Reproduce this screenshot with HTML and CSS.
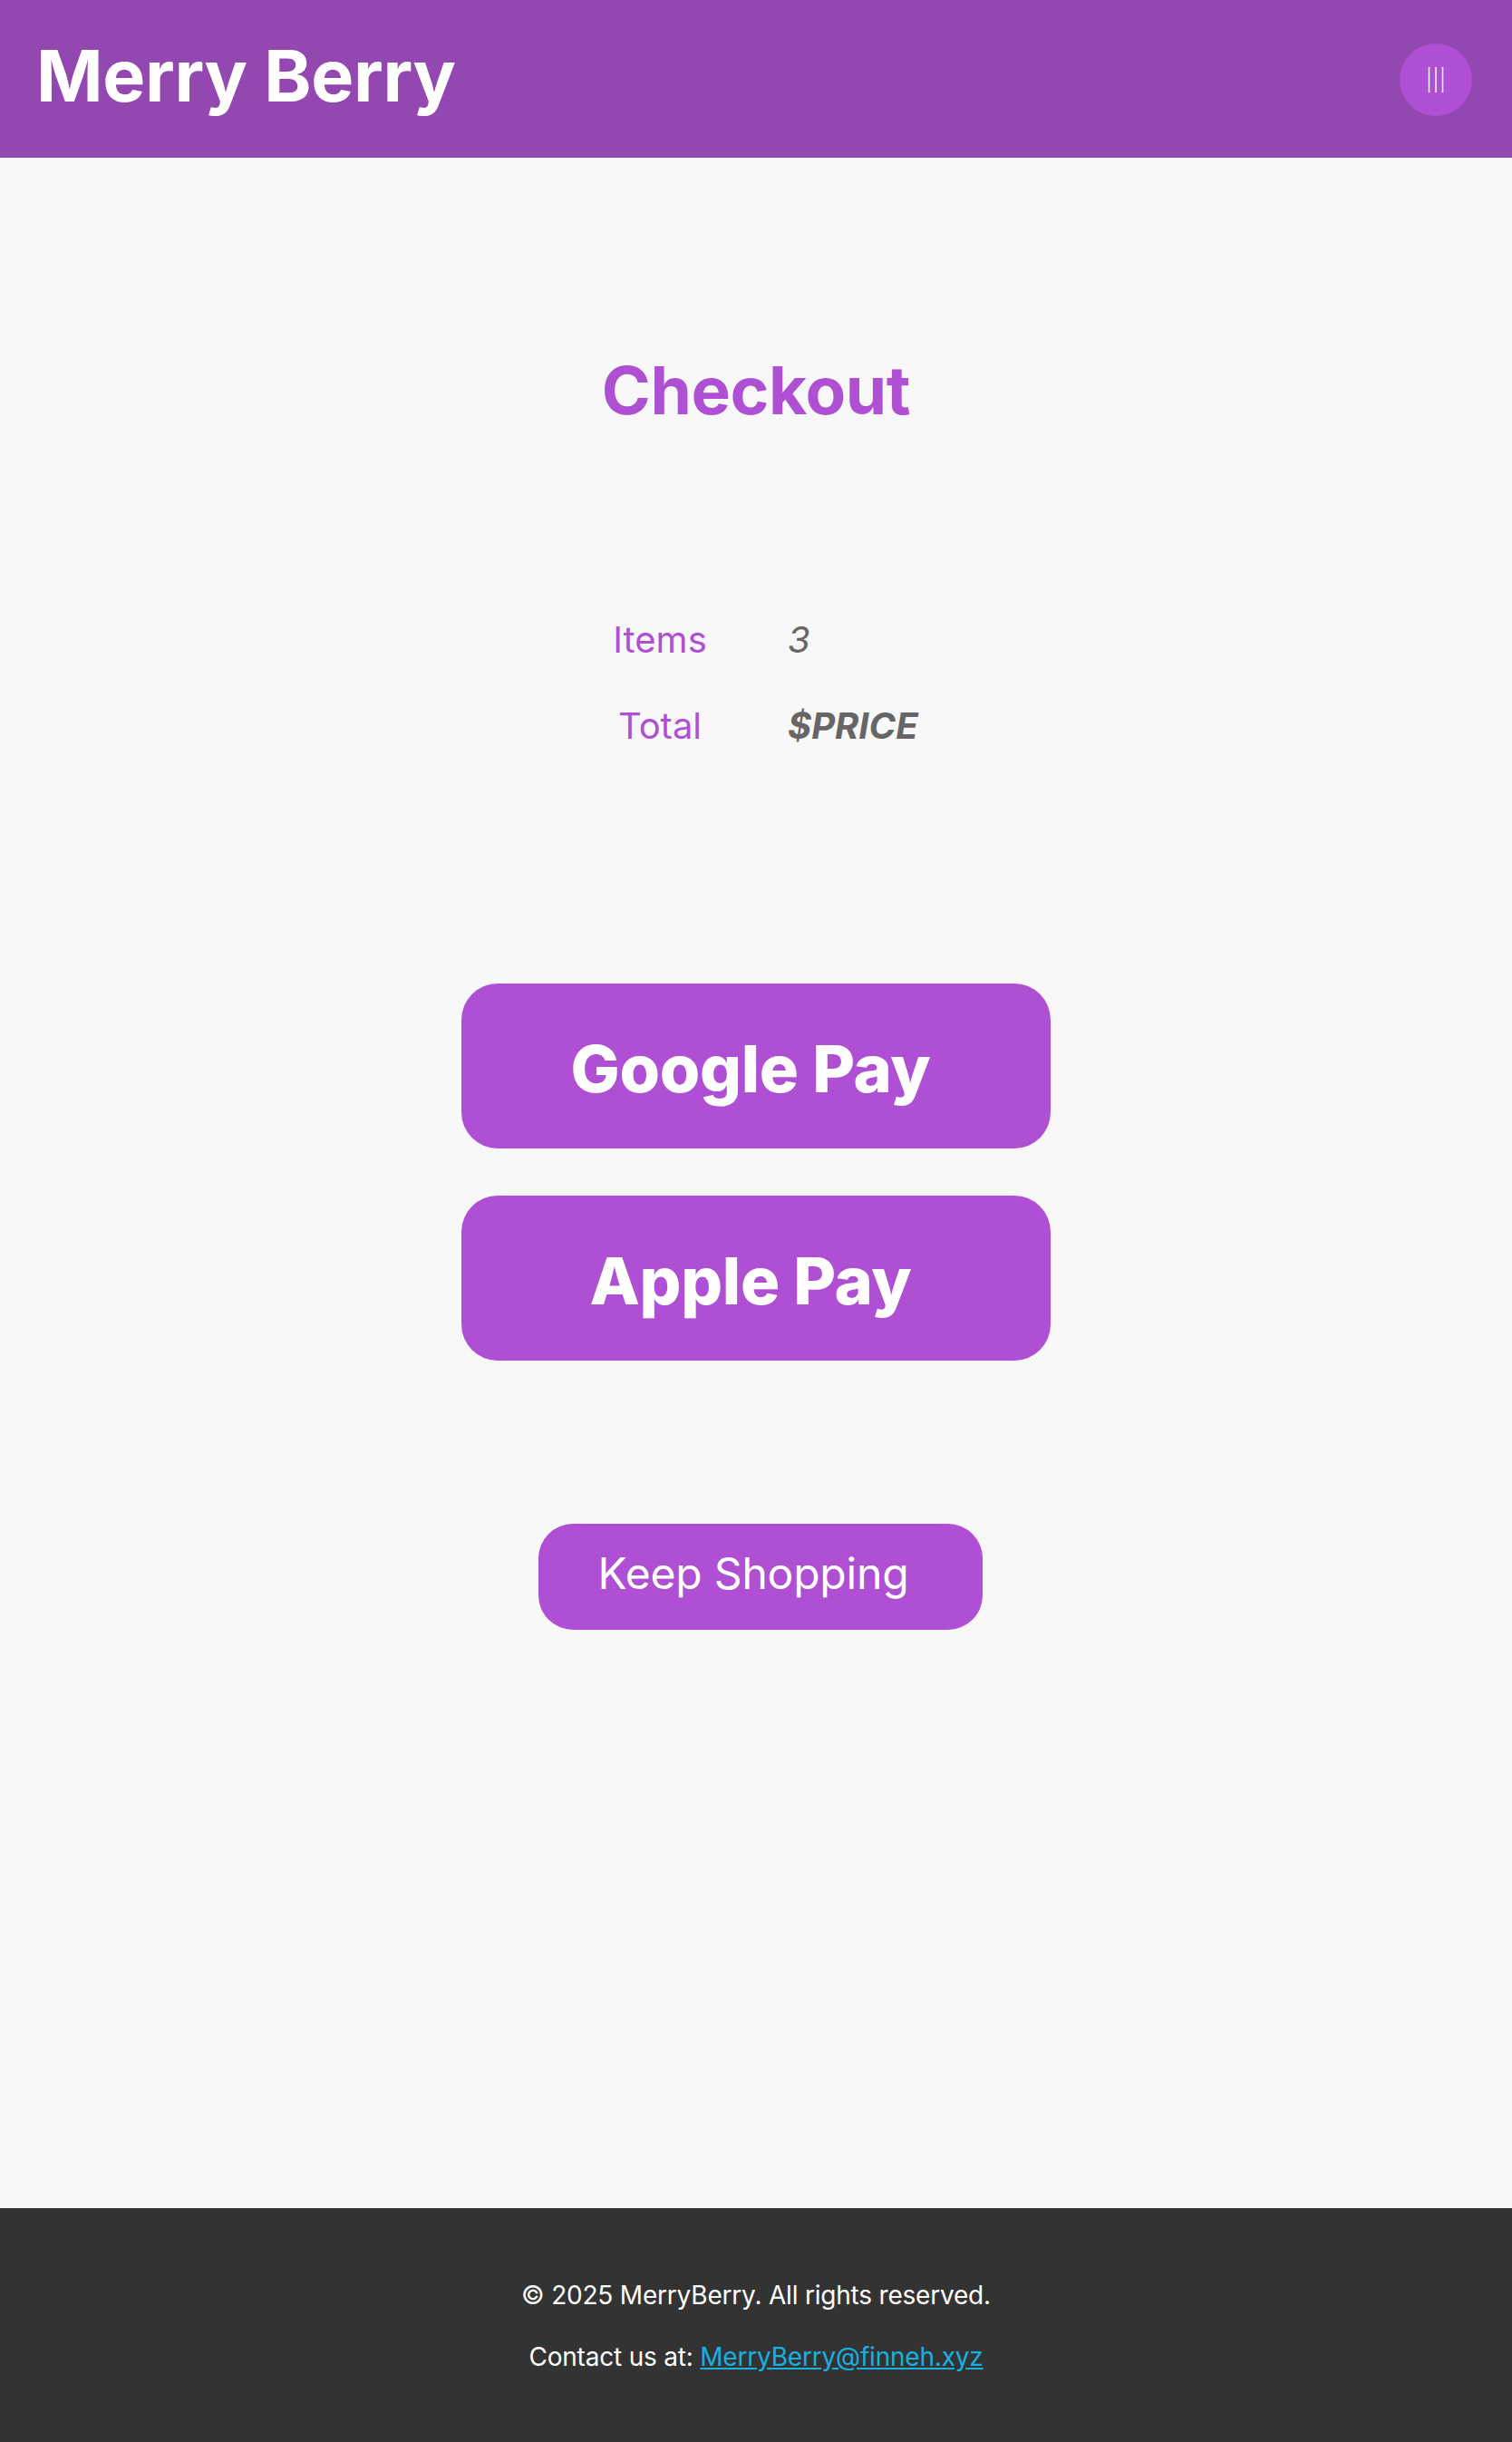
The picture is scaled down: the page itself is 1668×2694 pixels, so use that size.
FILE: index.html
```html
<!DOCTYPE html>
<html lang="en">
<head>
<meta charset="utf-8">
<title>Merry Berry - Checkout</title>
<link rel="stylesheet" href="styles.css">
</head>
<body>
<header class="site-header">
  <h1 class="brand">Merry Berry</h1>
  <button class="menu-btn" aria-label="Menu">
    <svg width="20" height="30" viewBox="0 0 20 30">
      <line x1="2.5" y1="1" x2="2.5" y2="29" stroke="#fff" stroke-width="1.5"/>
      <line x1="10" y1="1" x2="10" y2="29" stroke="#fff" stroke-width="1.5"/>
      <line x1="17.5" y1="1" x2="17.5" y2="29" stroke="#fff" stroke-width="1.5"/>
    </svg>
  </button>
</header>
<main class="checkout">
  <h2 class="title">Checkout</h2>
  <div class="summary">
    <div class="label">Items</div>
    <div class="value">3</div>
    <div class="label">Total</div>
    <div class="value price">$PRICE</div>
  </div>
  <div class="pay-list">
    <button class="pay-btn">Google Pay</button>
    <button class="pay-btn">Apple Pay</button>
  </div>
  <button class="keep-btn">Keep Shopping</button>
</main>
<footer class="site-footer">
  <p>© 2025 MerryBerry. All rights reserved.</p>
  <p>Contact us at: <a href="#">MerryBerry@finneh.xyz</a></p>
</footer>
</body>
</html>
```
FILE: styles.css
```css
* { box-sizing: border-box; }
html, body { margin: 0; padding: 0; }
body {
  font-family: Inter, "Noto Sans", "Liberation Sans", sans-serif;
  background: #f8f8f8;
  min-height: 100vh;
  display: flex;
  flex-direction: column;
}
.site-header {
  height: 174px;
  background: #9347b0;
  display: flex;
  align-items: center;
  justify-content: space-between;
  padding: 0 44px 0 40px;
}
.brand {
  margin: 0 0 8px 0;
  color: #fff;
  font-size: 79px;
  font-weight: 700;
  letter-spacing: -0.3px;
}
.menu-btn {
  width: 80px;
  height: 80px;
  border-radius: 50%;
  border: none;
  background: #af50d4;
  display: flex;
  align-items: center;
  justify-content: center;
  padding: 0;
  margin-top: 2px;
}
.menu-btn svg { display: block; }
.checkout {
  flex: 1;
  display: flex;
  flex-direction: column;
  align-items: center;
}
.title {
  margin: 212px 0 0 0;
  font-size: 73px;
  font-weight: 700;
  letter-spacing: -0.4px;
  color: #af50d4;
}
.summary {
  margin-top: 207px;
  display: grid;
  grid-template-columns: 200px 212px;
  row-gap: 47px;
  font-size: 40px;
  line-height: 48px;
}
.label {
  color: #af50d4;
  text-align: center;
}
.value {
  color: #666;
  font-style: italic;
  padding-left: 41px;
}
.price { font-weight: 700; }
.pay-list {
  margin-top: 260px;
  display: flex;
  flex-direction: column;
  gap: 52px;
}
.pay-btn {
  width: 650px;
  height: 182px;
  border: none;
  border-radius: 40px;
  background: #af50d4;
  color: #fff;
  font-family: inherit;
  font-size: 72px;
  font-weight: 800;
  letter-spacing: -0.3px;
  padding: 5px 12px 0 0;
}
.keep-btn {
  margin-top: 180px;
  margin-left: 10px;
  width: 490px;
  height: 117px;
  border: none;
  border-radius: 38px;
  background: #af50d4;
  color: #fff;
  font-family: inherit;
  font-size: 48px;
  font-weight: 400;
  letter-spacing: -0.2px;
  padding: 0 16px 9px 0;
}
.site-footer {
  background: #333;
  color: #fff;
  text-align: center;
  padding: 79px 20px 77px;
  display: flex;
  flex-direction: column;
  gap: 34px;
  font-size: 28px;
  line-height: 34px;
  letter-spacing: -0.2px;
}
.site-footer p { margin: 0; }
.site-footer a { color: #17b1e0; }
```
